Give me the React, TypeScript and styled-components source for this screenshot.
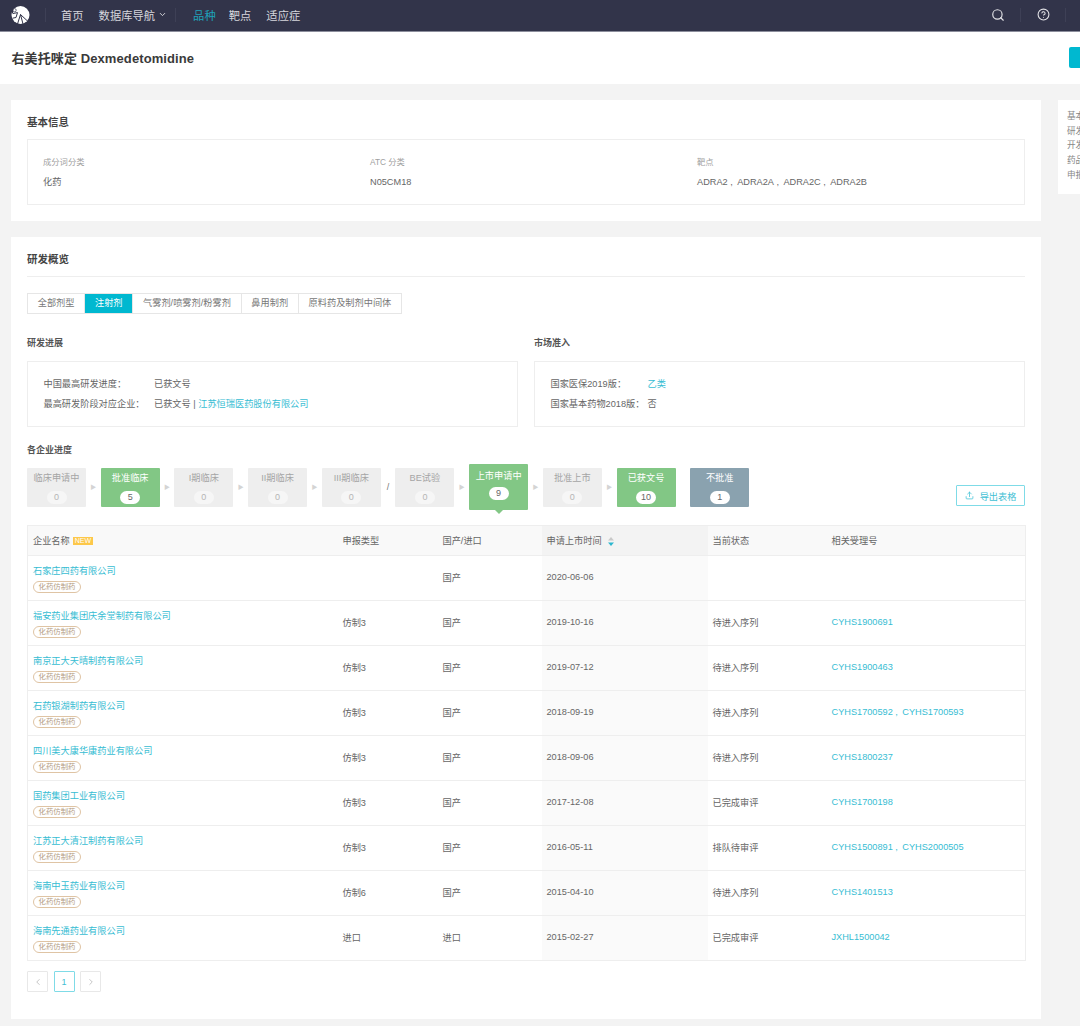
import React from "react";
import styled, { createGlobalStyle } from "styled-components";
import { Search, CircleHelp, ChevronDown, ChevronLeft, ChevronRight, Upload } from "lucide-react";

const Global = createGlobalStyle`
  html, body { margin: 0; padding: 0; background: #f3f3f3; overflow: hidden; height: 1026px; }
  body { font-family: "Liberation Sans", "Noto Sans CJK SC", sans-serif; font-size: 9.2px; color: #666; }
  * { box-sizing: border-box; }
`;

const Page = styled.div`width: 1080px; height: 1026px; overflow: hidden; background: #f3f3f3;`;

const Nav = styled.nav`
  height: 32px; background: #32344a; border-bottom: 1px solid #8c8e9c;
  display: flex; align-items: center; padding: 0 0 2px 10px; color: #d6d6dc; font-size: 11.3px;
`;
const Logo = styled.svg`width: 20px; height: 20px; display: block; flex: none; margin-right: 15px;`;
const NavSep = styled.span`width: 1px; height: 14px; background: #3e4056; flex: none;`;
const NavItem = styled.a<{ $active?: boolean; $gap: number }>`
  margin-left: ${p => p.$gap}px; color: ${p => (p.$active ? "#1ea3ba" : "#d6d6dc")};
  display: flex; align-items: center; white-space: nowrap;
`;
const NavRight = styled.div`margin-left: auto; display: flex; align-items: center; padding-right: 14px; color: #e2e2e6;`;
const NavIconBox = styled.span`
  width: 45px; flex: none; display: flex; justify-content: center; align-items: center; border-right: 1px solid #3e4056; height: 14px;
`;

const Header = styled.header`
  height: 52px; width: 1149px; background: #fff; display: flex; align-items: center;
  justify-content: space-between; padding: 0 0 2px 11.5px;
`;
const PageTitle = styled.h1`margin: 0; font-size: 13px; font-weight: 700; color: #3a3a3a; letter-spacing: 0.1px;`;
const HeaderButton = styled.button`width: 80px; height: 21px; border: 0; border-radius: 2px; background: #00b8d0;`;

const Body = styled.div`display: flex; align-items: flex-start; gap: 17px; padding: 16px 0 0 11px; width: 1200px;`;
const Main = styled.main`width: 1030px; flex: none; display: flex; flex-direction: column; gap: 16px;`;
const Aside = styled.aside`
  width: 100px; flex: none; height: 94px; background: #fff; padding: 9px 0 0 9px;
  font-size: 8.6px; line-height: 14.7px; color: #888;
`;
const AsideItem = styled.div`white-space: nowrap;`;

const Card = styled.section<{ $h: number }>`background: #fff; height: ${p => p.$h}px; padding: 0 16px;`;
const CardTitle = styled.h2<{ $rule?: boolean }>`
  margin: 0; height: ${p => (p.$rule ? 40 : 39)}px; font-size: 10.5px; font-weight: 700; color: #444; display: flex; align-items: center; padding-top: 3px;
  border-bottom: ${p => (p.$rule ? "1px solid #eee" : "0")};
`;

const InfoBox = styled.div`
  height: 66px; border: 1px solid #eee; display: grid; grid-template-columns: repeat(3, 327px); padding: 16px 0 0 15px;
`;
const InfoLabel = styled.div`font-size: 8.3px; color: #a0a0a0; line-height: 12px;`;
const InfoValue = styled.div`font-size: 9.2px; color: #666; line-height: 12px; margin-top: 8px;`;

const Tabs = styled.div`display: inline-flex; align-self: flex-start; margin-top: 16px; border: 1px solid #e6e6e6; height: 21px;`;
const Tab = styled.div<{ $active?: boolean }>`
  padding: 0 9.75px; line-height: 19px; font-size: 9.2px; white-space: nowrap;
  color: ${p => (p.$active ? "#fff" : "#777")}; background: ${p => (p.$active ? "#00b8d0" : "#fff")};
  & + & { border-left: 1px solid #e6e6e6; }
`;

const SubTitle = styled.h3`margin: 0; font-size: 9px; line-height: 12px; font-weight: 700; color: #555;`;
const ProgressTitle = styled(SubTitle)`margin-top: 17px;`;
const TwoCols = styled.div`display: grid; grid-template-columns: 491px 491px; gap: 16px; margin-top: 23px;`;
const StatusBox = styled.div`
  margin-top: 12px; height: 66px; border: 1px solid #eee; padding: 16px 15.5px 0;
  display: flex; flex-direction: column; gap: 7.5px;
`;
const StatusRow = styled.div`display: flex; line-height: 12px; font-size: 9.2px; color: #666; white-space: nowrap;`;
const StatusKey = styled.span<{ $w: number }>`width: ${p => p.$w}px; flex: none;`;
const Link = styled.a`color: #37bdd3;`;

const Stages = styled.div`display: flex; align-items: center; margin-top: 6px; height: 50px;`;
const Stage = styled.div<{ $tone: "off" | "on" | "no"; $current?: boolean }>`
  width: 59px; height: ${p => (p.$current ? 46 : 39)}px; flex: none; position: relative; text-align: center;
  padding-top: ${p => (p.$current ? 7 : 5)}px; font-size: 9.2px; line-height: 11px; border-radius: 1px;
  background: ${p => (p.$tone === "off" ? "#eeeeee" : p.$tone === "on" ? "#82c785" : "#8aa2af")};
  color: ${p => (p.$tone === "off" ? "#a5a5a5" : "#fff")};
  ${p => p.$current && `&::after { content: ""; position: absolute; left: 50%; bottom: -4px; margin-left: -4px;
    border: 4px solid transparent; border-bottom: 0; border-top-color: #82c785; }`}
`;
const Count = styled.div<{ $off: boolean; $current?: boolean }>`
  width: 20px; height: 13px; line-height: 13px; border-radius: 7px; margin: ${p => (p.$current ? 5 : 7)}px auto 0; font-size: 9px;
  background: ${p => (p.$off ? "#f6f6f6" : "#fff")}; color: ${p => (p.$off ? "#b5b5b5" : "#666")};
`;
const StageSep = styled.div`
  width: 14.7px; flex: none; display: flex; justify-content: center; color: #d4d4d4; font-size: 6px; line-height: 10px;
`;
const SlashSep = styled(StageSep)`color: #777; font-size: 9px;`;
const ExportButton = styled.button`
  margin: 0 0 6px auto; align-self: flex-end; width: 69px; height: 21px; border: 1px solid #7fdbe7; border-radius: 1px; background: #fff;
  color: #3fc0d4; font: inherit; font-size: 9.2px; display: flex; align-items: center; justify-content: center; gap: 6px; padding: 0;
`;

const Table = styled.table`
  margin-top: 13px; width: 998px; border-collapse: collapse; table-layout: fixed; border: 1px solid #eee;
`;
const Th = styled.th<{ $w: number; $sorted?: boolean }>`
  width: ${p => p.$w}px; height: 30px; padding: 0 5px 2px; text-align: left; font-weight: 400; font-size: 9.2px; color: #666;
  background: ${p => (p.$sorted ? "#f3f3f3" : "#f9f9f9")}; border-bottom: 1px solid #eee;
`;
const NewBadge = styled.span`
  display: inline-block; background: #fdc84a; color: #fff; font-size: 7px; line-height: 8px; padding: 0 2px; margin-left: 3px; vertical-align: 1px;
`;
const SortIcon = styled.svg`width: 6px; height: 9px; margin-left: 6px; vertical-align: -2px;`;
const Td = styled.td<{ $sorted?: boolean }>`
  height: 45px; padding: 0 5px 2px; font-size: 9.2px; color: #666; border-bottom: 1px solid #eee;
  background: ${p => (p.$sorted ? "#fafafa" : "#fff")}; white-space: nowrap;
`;
const NameCell = styled(Td)`padding-top: 2px; padding-bottom: 0;`;
const CompanyName = styled.a`display: block; color: #37bdd3; font-size: 9.2px; line-height: 12px;`;
const Tag = styled.span`
  display: block; width: 48px; height: 12px; margin-top: 4px; border: 1px solid #dfc4a4; border-radius: 6px;
  font-size: 7.4px; line-height: 10px; text-align: center; color: #b39c83;
`;

const Pagination = styled.div`display: flex; gap: 5.5px; margin-top: 10px;`;
const PageBtn = styled.div<{ $active?: boolean }>`
  width: 21px; height: 21px; display: flex; align-items: center; justify-content: center; font-size: 9px; border-radius: 1px;
  border: 1px solid ${p => (p.$active ? "#7fdbe7" : "#e8e8e8")}; color: ${p => (p.$active ? "#3fc0d4" : "#bbb")};
`;

const rows = [
  ["石家庄四药有限公司", "", "国产", "2020-06-06", "", []],
  ["福安药业集团庆余堂制药有限公司", "仿制3", "国产", "2019-10-16", "待进入序列", ["CYHS1900691"]],
  ["南京正大天晴制药有限公司", "仿制3", "国产", "2019-07-12", "待进入序列", ["CYHS1900463"]],
  ["石药银湖制药有限公司", "仿制3", "国产", "2018-09-19", "待进入序列", ["CYHS1700592", "CYHS1700593"]],
  ["四川美大康华康药业有限公司", "仿制3", "国产", "2018-09-06", "待进入序列", ["CYHS1800237"]],
  ["国药集团工业有限公司", "仿制3", "国产", "2017-12-08", "已完成审评", ["CYHS1700198"]],
  ["江苏正大清江制药有限公司", "仿制3", "国产", "2016-05-11", "排队待审评", ["CYHS1500891", "CYHS2000505"]],
  ["海南中玉药业有限公司", "仿制6", "国产", "2015-04-10", "待进入序列", ["CYHS1401513"]],
  ["海南先通药业有限公司", "进口", "进口", "2015-02-27", "已完成审评", ["JXHL1500042"]],
] as [string, string, string, string, string, string[]][];

type S = { name: string; n: number; tone: "off" | "on" | "no"; current?: boolean; sep?: "arrow" | "slash" | "none" };
const stages: S[] = [
  { name: "临床申请中", n: 0, tone: "off", sep: "arrow" },
  { name: "批准临床", n: 5, tone: "on", sep: "arrow" },
  { name: "I期临床", n: 0, tone: "off", sep: "arrow" },
  { name: "II期临床", n: 0, tone: "off", sep: "arrow" },
  { name: "III期临床", n: 0, tone: "off", sep: "slash" },
  { name: "BE试验", n: 0, tone: "off", sep: "arrow" },
  { name: "上市申请中", n: 9, tone: "on", current: true, sep: "arrow" },
  { name: "批准上市", n: 0, tone: "off", sep: "arrow" },
  { name: "已获文号", n: 10, tone: "on", sep: "none" },
  { name: "不批准", n: 1, tone: "no" },
];

const COMMA = "\u00a0,\u2009\u00a0";

export default function App() {
  return (
    <Page>
      <Global />
      <Nav>
        <Logo viewBox="0 0 20 20">
          <circle cx="10.5" cy="10" r="9" fill="#fff" />
          <path d="M4.5 1 L2 3 L2 8 L3 8" fill="#32344a" />
          <circle cx="4.6" cy="5.2" r="1.6" fill="#fff" stroke="#32344a" strokeWidth="0.7" />
          <g stroke="#32344a" strokeWidth="1" fill="none">
            <path d="M2.5 8.6 L7.5 7.6 L6 12.5 L2.5 13.2" />
            <path d="M10.5 9.5 L7.5 19" />
            <path d="M10.5 9.5 L13 19" />
            <path d="M10.5 9.5 L17.5 16" />
          </g>
        </Logo>
        <NavSep />
        <NavItem $gap={15}>首页</NavItem>
        <NavItem $gap={15}>数据库导航<ChevronDown size={9} strokeWidth={2.5} style={{ marginLeft: 3 }} /></NavItem>
        <NavItem $gap={8} as="span"><NavSep /></NavItem>
        <NavItem $gap={17} $active>品种</NavItem>
        <NavItem $gap={13}>靶点</NavItem>
        <NavItem $gap={15}>适应症</NavItem>
        <NavRight>
          <NavIconBox><Search size={14} strokeWidth={2} /></NavIconBox>
          <NavIconBox><CircleHelp size={13} strokeWidth={2} /></NavIconBox>
        </NavRight>
      </Nav>
      <Header>
        <PageTitle>右美托咪定 Dexmedetomidine</PageTitle>
        <HeaderButton aria-label="操作" />
      </Header>
      <Body>
        <Main>
          <Card $h={121}>
            <CardTitle>基本信息</CardTitle>
            <InfoBox>
              <div><InfoLabel>成分词分类</InfoLabel><InfoValue>化药</InfoValue></div>
              <div><InfoLabel>ATC 分类</InfoLabel><InfoValue>N05CM18</InfoValue></div>
              <div><InfoLabel>靶点</InfoLabel><InfoValue>{["ADRA2", "ADRA2A", "ADRA2C", "ADRA2B"].join(COMMA)}</InfoValue></div>
            </InfoBox>
          </Card>
          <Card $h={782}>
            <CardTitle $rule>研发概览</CardTitle>
            <Tabs>
              <Tab>全部剂型</Tab>
              <Tab $active>注射剂</Tab>
              <Tab>气雾剂/喷雾剂/粉雾剂</Tab>
              <Tab>鼻用制剂</Tab>
              <Tab>原料药及制剂中间体</Tab>
            </Tabs>
            <TwoCols>
              <div>
                <SubTitle>研发进展</SubTitle>
                <StatusBox>
                  <StatusRow><StatusKey $w={110.5}>中国最高研发进度：</StatusKey>已获文号</StatusRow>
                  <StatusRow><StatusKey $w={110.5}>最高研发阶段对应企业：</StatusKey>已获文号 |&nbsp;<Link>江苏恒瑞医药股份有限公司</Link></StatusRow>
                </StatusBox>
              </div>
              <div>
                <SubTitle>市场准入</SubTitle>
                <StatusBox>
                  <StatusRow><StatusKey $w={97}>国家医保2019版：</StatusKey><Link>乙类</Link></StatusRow>
                  <StatusRow><StatusKey $w={97}>国家基本药物2018版：</StatusKey>否</StatusRow>
                </StatusBox>
              </div>
            </TwoCols>
            <ProgressTitle>各企业进度</ProgressTitle>
            <Stages>
              {stages.map(s => (
                <React.Fragment key={s.name}>
                  <Stage $tone={s.tone} $current={s.current}>
                    {s.name}
                    <Count $off={s.tone === "off"} $current={s.current}>{s.n}</Count>
                  </Stage>
                  {s.sep === "arrow" && <StageSep>▶</StageSep>}
                  {s.sep === "slash" && <SlashSep>/</SlashSep>}
                  {s.sep === "none" && <StageSep />}
                </React.Fragment>
              ))}
              <ExportButton><Upload size={9} />导出表格</ExportButton>
            </Stages>
            <Table>
              <thead>
                <tr>
                  <Th $w={310}>企业名称<NewBadge>NEW</NewBadge></Th>
                  <Th $w={100}>申报类型</Th>
                  <Th $w={104}>国产/进口</Th>
                  <Th $w={166} $sorted>
                    申请上市时间
                    <SortIcon viewBox="0 0 6 9">
                      <path d="M3 0 L6 3.6 H0Z" fill="#c9c9c9" />
                      <path d="M3 9 L6 5.4 H0Z" fill="#2db7cf" />
                    </SortIcon>
                  </Th>
                  <Th $w={119}>当前状态</Th>
                  <Th $w={199}>相关受理号</Th>
                </tr>
              </thead>
              <tbody>
                {rows.map(r => (
                  <tr key={r[0]}>
                    <NameCell><CompanyName>{r[0]}</CompanyName><Tag>化药仿制药</Tag></NameCell>
                    <Td>{r[1]}</Td>
                    <Td>{r[2]}</Td>
                    <Td $sorted>{r[3]}</Td>
                    <Td>{r[4]}</Td>
                    <Td><Link>{r[5].join(COMMA)}</Link></Td>
                  </tr>
                ))}
              </tbody>
            </Table>
            <Pagination>
              <PageBtn><ChevronLeft size={10} /></PageBtn>
              <PageBtn $active>1</PageBtn>
              <PageBtn><ChevronRight size={10} /></PageBtn>
            </Pagination>
          </Card>
        </Main>
        <Aside>
          <AsideItem>基本信息</AsideItem>
          <AsideItem>研发概览</AsideItem>
          <AsideItem>开发进度</AsideItem>
          <AsideItem>药品说明</AsideItem>
          <AsideItem>申报信息</AsideItem>
        </Aside>
      </Body>
    </Page>
  );
}
